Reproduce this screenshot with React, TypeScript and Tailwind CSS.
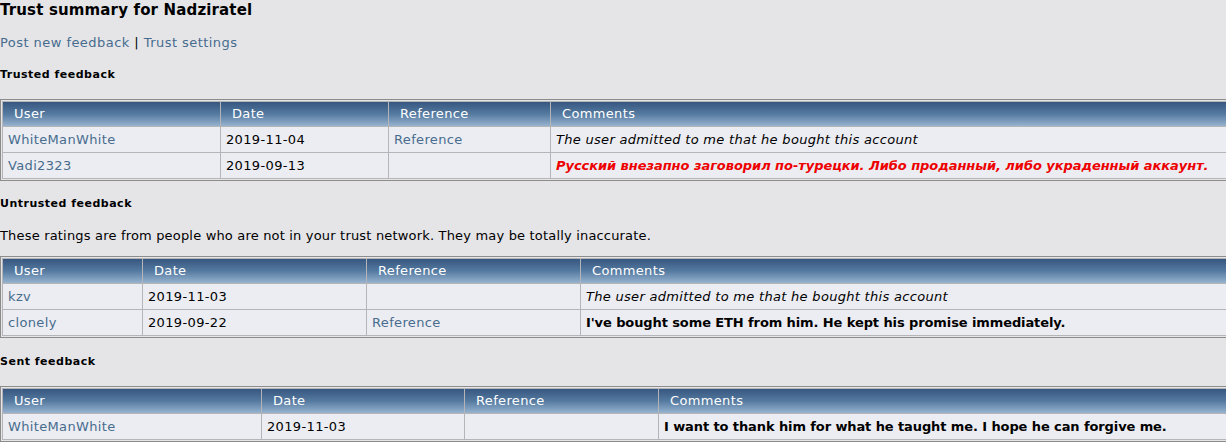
import React from "react";

type Row = {
  user: string;
  date: string;
  reference?: boolean;
  comment: string;
  style: "italic" | "bold" | "red";
};

const trusted: Row[] = [
  { user: "WhiteManWhite", date: "2019-11-04", reference: true, comment: "The user admitted to me that he bought this account", style: "italic" },
  { user: "Vadi2323", date: "2019-09-13", comment: "Русский внезапно заговорил по-турецки. Либо проданный, либо украденный аккаунт.", style: "red" },
];

const untrusted: Row[] = [
  { user: "kzv", date: "2019-11-03", comment: "The user admitted to me that he bought this account", style: "italic" },
  { user: "clonely", date: "2019-09-22", reference: true, comment: "I've bought some ETH from him. He kept his promise immediately.", style: "bold" },
];

const sent: Row[] = [
  { user: "WhiteManWhite", date: "2019-11-03", comment: "I want to thank him for what he taught me. I hope he can forgive me.", style: "bold" },
];

const commentClass = {
  italic: "italic text-black tracking-[0.3px]",
  bold: "font-bold text-black tracking-[-0.1px]",
  red: "italic font-bold text-[#ee0000] tracking-[-0.05px]",
};

const FeedbackTable = ({ rows, widths }: { rows: Row[]; widths: [number, number, number] }) => (
  <div className="w-[1300px] border border-[#8c8c8c] bg-[#e5e5e8] p-px">
    <table className="w-full table-fixed border-separate border-spacing-px bg-[#b5b5b8] text-[13px] tracking-[0.35px]">
      <thead>
        <tr>
          {["User", "Date", "Reference", "Comments"].map((h, i) => (
            <th
              key={h}
              style={i < 3 ? { width: widths[i] } : undefined}
              className="h-[24px] bg-gradient-to-b from-[#375780] via-[#557aa0] to-[#97b3cf] pl-[11px] text-left font-normal text-white"
            >
              {h}
            </th>
          ))}
        </tr>
      </thead>
      <tbody>
        {rows.map((r) => (
          <tr key={r.user + r.date}>
            <td className="h-[25px] bg-[#ecedf2] px-[5px] text-[#476c8e]">{r.user}</td>
            <td className="bg-[#ecedf2] px-[5px] text-black">{r.date}</td>
            <td className="bg-[#ecedf2] px-[5px] text-[#476c8e]">{r.reference ? "Reference" : ""}</td>
            <td className={`bg-[#ecedf2] px-[5px] whitespace-nowrap ${commentClass[r.style]}`}>{r.comment}</td>
          </tr>
        ))}
      </tbody>
    </table>
  </div>
);

const App = () => {
  return (
    <div className="h-[442px] w-full overflow-hidden bg-[#e5e5e8] font-['DejaVu_Sans',Verdana,sans-serif] text-black">
      <div className="pt-[1px]">
        <h1 className="text-[15px] font-bold leading-[18px] tracking-[0.15px]">Trust summary for Nadziratel</h1>
        <p className="mt-[16px] text-[13px] leading-[16px] tracking-[0.45px]">
          <span className="text-[#476c8e]">Post new feedback</span> | <span className="text-[#476c8e]">Trust settings</span>
        </p>
        <h2 className="mt-[17px] text-[11px] font-bold leading-[14px] tracking-[0.5px]">Trusted feedback</h2>
        <div className="mt-[17px]">
          <FeedbackTable rows={trusted} widths={[217, 167, 161]} />
        </div>
        <h2 className="mt-[16px] text-[11px] font-bold leading-[14px] tracking-[0.5px]">Untrusted feedback</h2>
        <p className="mt-[17px] text-[13px] leading-[16px] tracking-[0.18px]">
          These ratings are from people who are not in your trust network. They may be totally inaccurate.
        </p>
        <div className="mt-[12px]">
          <FeedbackTable rows={untrusted} widths={[139, 223, 213]} />
        </div>
        <h2 className="mt-[17px] text-[11px] font-bold leading-[14px] tracking-[0.5px]">Sent feedback</h2>
        <div className="mt-[17px]">
          <FeedbackTable rows={sent} widths={[258, 202, 193]} />
        </div>
      </div>
    </div>
  );
};

export default App;
